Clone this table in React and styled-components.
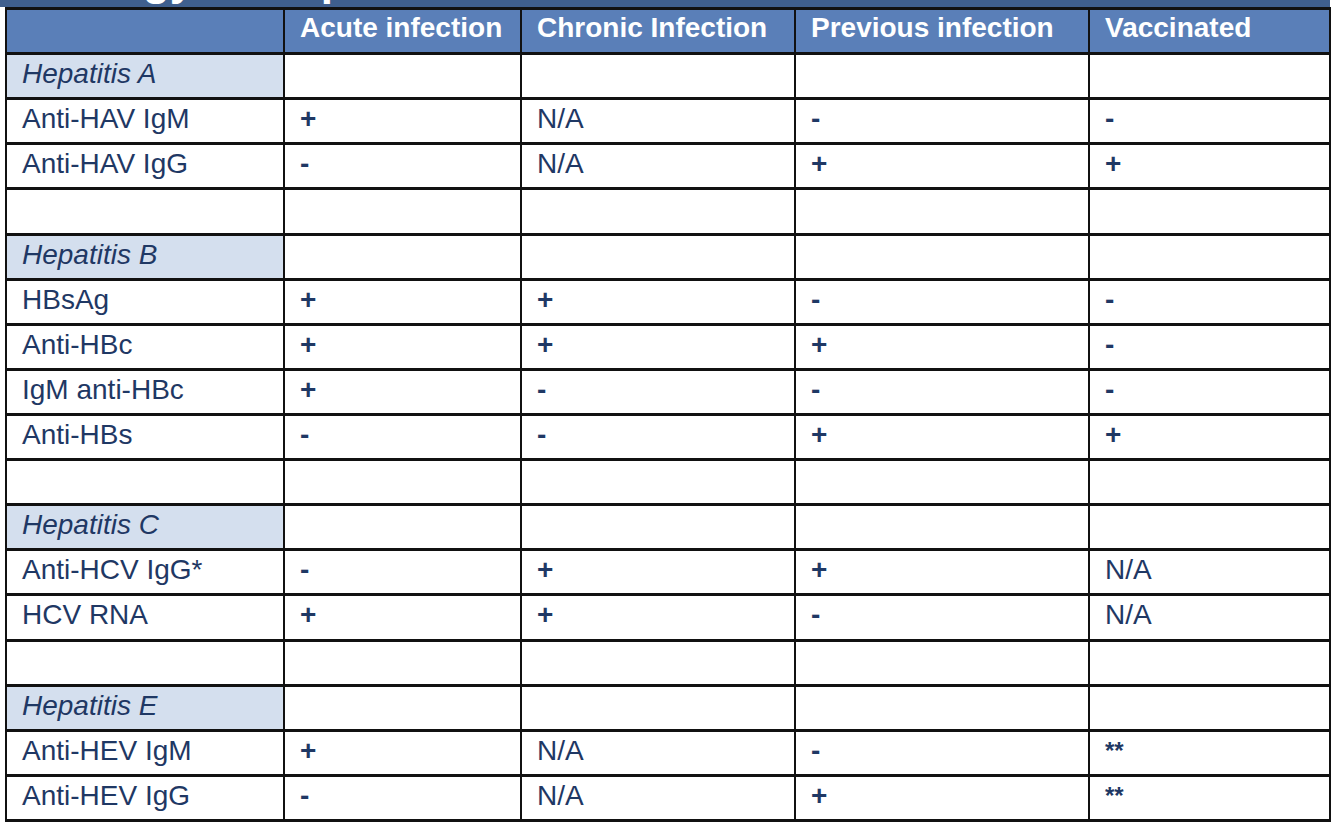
import styled, { createGlobalStyle } from "styled-components";

const GlobalStyle = createGlobalStyle`
  html, body {
    margin: 0;
    padding: 0;
    background: #ffffff;
  }
  body {
    font-family: 'Liberation Sans', Arial, sans-serif;
  }
`

const Page = styled.div`
  width: 1334px;
  height: 832px;
  overflow: hidden;
  background: #ffffff;
`

const Banner = styled.div`
  width: 1330px;
  height: 7px;
  overflow: hidden;
  background-color: #3f5f8e;
  &>h1{
    margin: -42px 0 0 0;
    padding-left: 6px;
    font-size: 44px;
    line-height: 44px;
    font-weight: bold;
    color: #ffffff;
    white-space: nowrap;
    word-spacing: 19px;
  }
`

const TableWrap = styled.div`
  padding-left: 5px;
`

const Table = styled.table`
  width: 1324px;
  table-layout: fixed;
  border-collapse: collapse;
  font-size: 28px;
  color: #1f3864;
  & td, & th{
    border-top: 3px solid #111111;
    border-bottom: 3px solid #111111;
    border-left: 2px solid #111111;
    border-right: 2px solid #111111;
    height: 45.12px;
    box-sizing: border-box;
    padding: 2px 10px 0 15px;
    vertical-align: top;
    text-align: left;
    line-height: 34px;
    white-space: nowrap;
  }
  & th{
    padding-top: 1px;
  }
`

const HeadCell = styled.th`
  background-color: #5a7fb8;
  color: #ffffff;
  font-weight: bold;
`

const Cell = styled.td`
  background-color: ${(p) => (p.$group ? "#d4dfee" : "#ffffff")};
  font-style: ${(p) => (p.$group ? "italic" : "normal")};
  font-weight: ${(p) => (p.$sign ? "bold" : "normal")};
  font-size: ${(p) => (p.$note ? "24px" : "28px")};
`

const columns = ["", "Acute infection", "Chronic Infection", "Previous infection", "Vaccinated"];
const widths = [278, 237, 274, 294, 241];

const rows = [
  { group: "Hepatitis A" },
  { name: "Anti-HAV IgM", values: ["+", "N/A", "-", "-"] },
  { name: "Anti-HAV IgG", values: ["-", "N/A", "+", "+"] },
  { blank: true },
  { group: "Hepatitis B" },
  { name: "HBsAg", values: ["+", "+", "-", "-"] },
  { name: "Anti-HBc", values: ["+", "+", "+", "-"] },
  { name: "IgM anti-HBc", values: ["+", "-", "-", "-"] },
  { name: "Anti-HBs", values: ["-", "-", "+", "+"] },
  { blank: true },
  { group: "Hepatitis C" },
  { name: "Anti-HCV IgG*", values: ["-", "+", "+", "N/A"] },
  { name: "HCV RNA", values: ["+", "+", "-", "N/A"] },
  { blank: true },
  { group: "Hepatitis E" },
  { name: "Anti-HEV IgM", values: ["+", "N/A", "-", "**"] },
  { name: "Anti-HEV IgG", values: ["-", "N/A", "+", "**"] },
];

const isSign = (v) => v === "+" || v === "-" || v === "**";

const App = () => {
  return (
    <Page>
      <GlobalStyle />
      <Banner>
        <h1>Serology interpretation</h1>
      </Banner>
      <TableWrap>
        <Table>
          <colgroup>
            {widths.map((w, i) => <col key={i} style={{ width: w }} />)}
          </colgroup>
          <thead>
            <tr>
              {columns.map((c, i) => <HeadCell key={i}>{c}</HeadCell>)}
            </tr>
          </thead>
          <tbody>
            {rows.map((r, i) => {
              if (r.group) {
                return (
                  <tr key={i}>
                    <Cell $group>{r.group}</Cell>
                    <Cell /><Cell /><Cell /><Cell />
                  </tr>
                )
              }
              if (r.blank) {
                return (
                  <tr key={i}>
                    <Cell /><Cell /><Cell /><Cell /><Cell />
                  </tr>
                )
              }
              return (
                <tr key={i}>
                  <Cell>{r.name}</Cell>
                  {r.values.map((v, j) => (
                    <Cell key={j} $sign={isSign(v)} $note={v === "**"}>{v}</Cell>
                  ))}
                </tr>
              )
            })}
          </tbody>
        </Table>
      </TableWrap>
    </Page>
  )
}

export default App;
